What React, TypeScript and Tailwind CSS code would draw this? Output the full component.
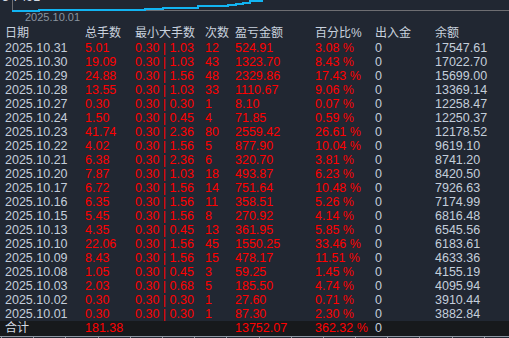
import React from "react";

type Row = [string, string, string, string, string, string, string, string];

const rows: Row[] = [
  ["2025.10.31", "5.01", "0.30 | 1.03", "12", "524.91", "3.08 %", "0", "17547.61"],
  ["2025.10.30", "19.09", "0.30 | 1.03", "43", "1323.70", "8.43 %", "0", "17022.70"],
  ["2025.10.29", "24.88", "0.30 | 1.56", "48", "2329.86", "17.43 %", "0", "15699.00"],
  ["2025.10.28", "13.55", "0.30 | 1.03", "33", "1110.67", "9.06 %", "0", "13369.14"],
  ["2025.10.27", "0.30", "0.30 | 0.30", "1", "8.10", "0.07 %", "0", "12258.47"],
  ["2025.10.24", "1.50", "0.30 | 0.45", "4", "71.85", "0.59 %", "0", "12250.37"],
  ["2025.10.23", "41.74", "0.30 | 2.36", "80", "2559.42", "26.61 %", "0", "12178.52"],
  ["2025.10.22", "4.02", "0.30 | 1.56", "5", "877.90", "10.04 %", "0", "9619.10"],
  ["2025.10.21", "6.38", "0.30 | 2.36", "6", "320.70", "3.81 %", "0", "8741.20"],
  ["2025.10.20", "7.87", "0.30 | 1.03", "18", "493.87", "6.23 %", "0", "8420.50"],
  ["2025.10.17", "6.72", "0.30 | 1.56", "14", "751.64", "10.48 %", "0", "7926.63"],
  ["2025.10.16", "6.35", "0.30 | 1.56", "11", "358.51", "5.26 %", "0", "7174.99"],
  ["2025.10.15", "5.45", "0.30 | 1.56", "8", "270.92", "4.14 %", "0", "6816.48"],
  ["2025.10.13", "4.35", "0.30 | 0.45", "13", "361.95", "5.85 %", "0", "6545.56"],
  ["2025.10.10", "22.06", "0.30 | 1.56", "45", "1550.25", "33.46 %", "0", "6183.61"],
  ["2025.10.09", "8.43", "0.30 | 1.56", "15", "478.17", "11.51 %", "0", "4633.36"],
  ["2025.10.08", "1.05", "0.30 | 0.45", "3", "59.25", "1.45 %", "0", "4155.19"],
  ["2025.10.03", "2.03", "0.30 | 0.68", "5", "185.50", "4.74 %", "0", "4095.94"],
  ["2025.10.02", "0.30", "0.30 | 0.30", "1", "27.60", "0.71 %", "0", "3910.44"],
  ["2025.10.01", "0.30", "0.30 | 0.30", "1", "87.30", "2.30 %", "0", "3882.84"],
];

const headers = ["日期", "总手数", "最小大手数", "次数", "盈亏金额", "百分比%", "出入金", "余额"];

const grid = "grid grid-cols-[80px_50px_70px_30px_80px_60px_60px_1fr] pl-[5px] whitespace-pre";

function Chart() {
  const ticks: number[] = [];
  for (let i = 0; i < 16; i++) ticks.push(1 + i * 32.2);
  return (
    <div className="relative h-[26px] w-full overflow-hidden">
      <svg className="absolute left-0 top-0" width="509" height="26" viewBox="0 0 509 26">
        <line x1="12.5" y1="-2" x2="12.5" y2="10.5" stroke="#6e6e72" strokeWidth="1" />
        <line x1="12" y1="10.5" x2="509" y2="10.5" stroke="#6e6e72" strokeWidth="1" />
        <polyline
          fill="none"
          stroke="#12b4f2"
          strokeWidth="2"
          points="12,11 39,11 39,10 145,10 145,9 163,9 163,8 198,8 198,6 228,6 228,5 236,5 236,4 243,4 243,3 250,3 250,1 262,1 262,-2"
        />
      </svg>
      <div className="absolute left-[2px] top-[-9px] text-[12.5px] leading-[12px] text-[#d4dae2]">3 7491</div>
      <div className="absolute left-[25px] top-[11px] text-[11px] leading-[12px] text-[#8a949f]">2025.10.01</div>
    </div>
  );
}

export default function App() {
  return (
    <div className="relative h-[338px] w-[509px] overflow-hidden bg-[#212732] font-['Liberation_Sans_Narrow','Liberation_Sans','Noto_Sans_CJK_SC',sans-serif] text-[12.5px]">
      <Chart />
      <div className={`${grid} h-[15px] items-center leading-[15px] text-[#c9d2de]`}>
        {headers.map((h) => (
          <div key={h} className="text-[12px]">{h}</div>
        ))}
      </div>
      <div className="flex flex-col">
        {rows.map((r) => (
          <div key={r[0]} className={`${grid} h-[14px] items-center leading-[14px]`}>
            <div className="text-[#c4cedb]">{r[0]}</div>
            <div className="text-[#ff0000]">{r[1]}</div>
            <div className="text-[#ff0000]">{r[2]}</div>
            <div className="text-[#ff0000]">{r[3]}</div>
            <div className="text-[#ff0000]">{r[4]}</div>
            <div className="text-[#ff0000]">{r[5]}</div>
            <div className="text-[#c4cedb]">{r[6]}</div>
            <div className="text-[#c4cedb]">{r[7]}</div>
          </div>
        ))}
      </div>
      <div className={`${grid} h-[15px] items-center leading-[15px] bg-[#17191c]`}>
        <div className="text-[12px] text-[#d4dae2]">合计</div>
        <div className="text-[#ff0000]">181.38</div>
        <div />
        <div />
        <div className="text-[#ff0000]">13752.07</div>
        <div className="text-[#ff0000]">362.32 %</div>
        <div className="text-[#c4cedb]">0</div>
        <div />
      </div>
      <div className="h-px w-full bg-[#8f98a3]" />
      <div className="flex h-[2px] w-full">
        {Array.from({ length: 16 }).map((_, i) => (
          <div key={i} className="h-[2px] w-[32.2px] shrink-0">
            <div className="ml-px h-[2px] w-px bg-[#8f98a3]" />
          </div>
        ))}
      </div>
    </div>
  );
}
